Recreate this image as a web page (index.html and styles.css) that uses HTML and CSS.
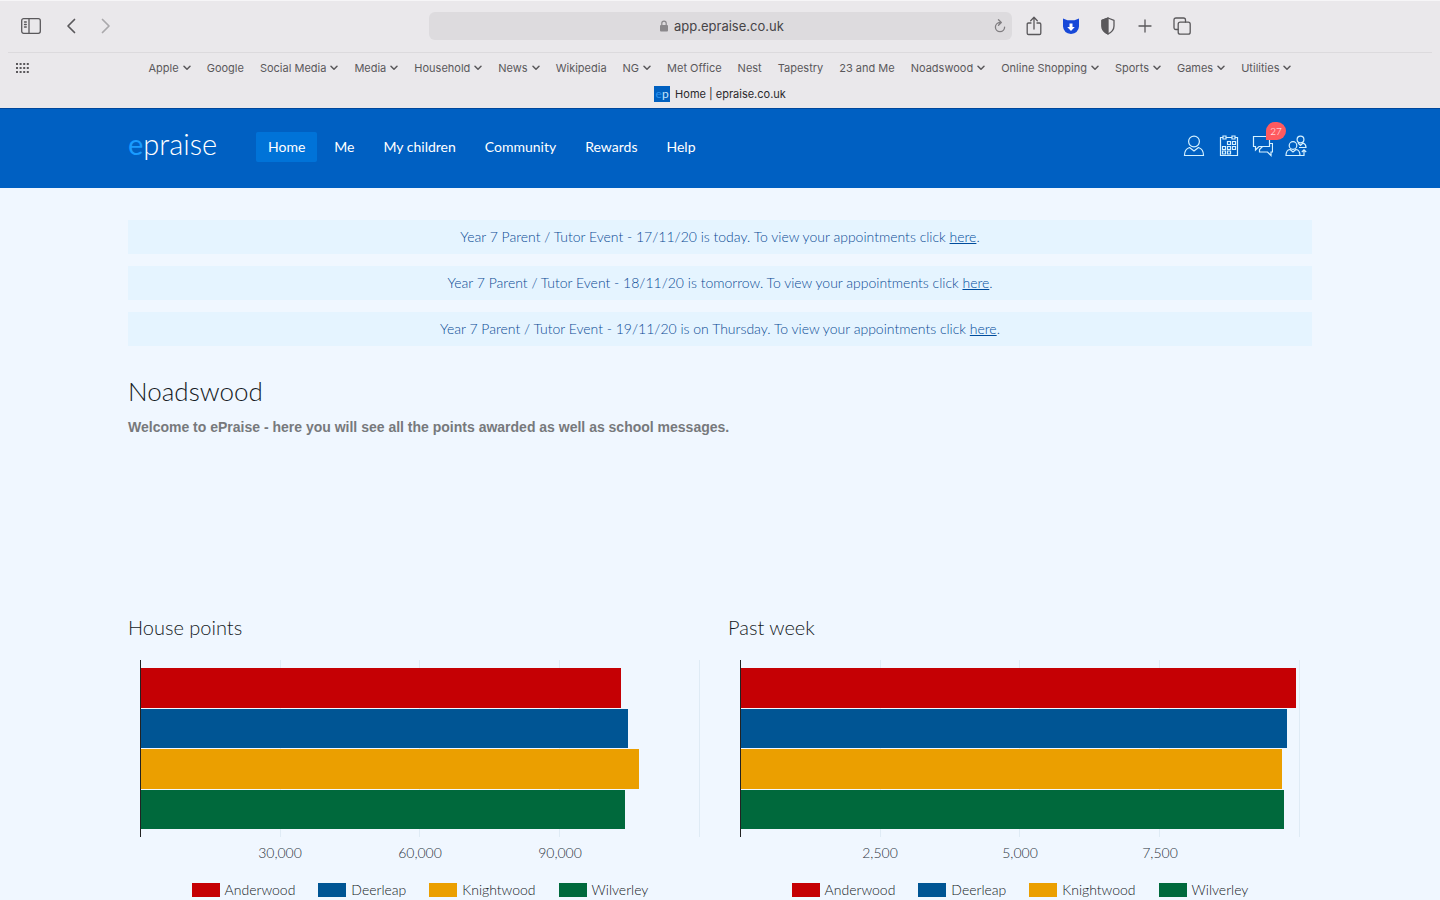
FILE: index.html
```html
<!DOCTYPE html>
<html lang="en">
<head>
    <meta charset="UTF-8">
    <meta name="viewport" content="width=device-width, initial-scale=1.0">
    <title>Home | epraise.co.uk</title>
    <link rel="stylesheet" href="styles.css">
</head>
<body>
    <svg class="sprite" aria-hidden="true">
        <symbol id="chevron" viewBox="0 0 8 6"><path d="M1 1.2l3 3 3-3" fill="none" stroke="currentColor" stroke-width="1.5" stroke-linecap="round" stroke-linejoin="round"/></symbol>
    </svg>

    <div class="browser">
        <div class="toolbar">
            <div class="tools tools-left">
                <button aria-label="Sidebar"><svg width="20" height="16" viewBox="0 0 20 16"><rect x="0.7" y="0.7" width="18.6" height="14.6" rx="2"/><path d="M8 1v14M3.500 4h1.800M3.500 6.500h1.800M3.500 9h1.800"/></svg></button>
                <button aria-label="Back"><svg width="10" height="16" viewBox="0 0 10 16"><path d="M8.500 1.500L2 8l6.500 6.500" stroke-width="1.700"/></svg></button>
                <button aria-label="Forward" class="disabled" disabled><svg width="10" height="16" viewBox="0 0 10 16"><path d="M1.500 1.500L8 8l-6.500 6.500" stroke-width="1.700"/></svg></button>
            </div>
            <div class="address">
                <svg class="lock" width="8" height="12" viewBox="0 0 8 12"><path d="M1.800 6V3.300a2.200 2.200 0 0 1 4.400 0V6" fill="none" stroke="#8a888b" stroke-width="1.200"/><rect class="lock-body" y="5" width="8" height="6.500" rx="1"/></svg>
                <input type="text" value="app.epraise.co.uk" aria-label="Address">
                <button class="reload" aria-label="Reload"><svg width="12" height="14" viewBox="0 0 12 14"><path d="M6 3.500a4.600 4.600 0 1 0 4.600 4.600M4.500 0.800L7.300 3.500 4.500 6.200"/></svg></button>
            </div>
            <div class="tools tools-right">
                <button aria-label="Share"><svg width="16" height="20" viewBox="0 0 16 20"><path d="M5 7H2.500Q1.200 7 1.200 8.300v8.900q0 1.300 1.300 1.300h11q1.300 0 1.300-1.300V8.300Q14.800 7 13.500 7H11M8 13V1.500M4.700 4.700L8 1.300l3.300 3.400"/></svg></button>
                <button aria-label="Downloads"><svg width="18" height="18" viewBox="0 0 18 18"><path d="M1 1.500l4.500 1.700h7L17 1.500v8Q16.500 16 9 17 1.500 16 1 9.500z" fill="#1748d8" stroke="none"/><path d="M7.500 6.500h3V10h2.300L9 14 5.200 10h2.300z" fill="#fff" stroke="none"/></svg></button>
                <button aria-label="Privacy report"><svg width="14" height="18" viewBox="0 0 14 18"><path d="M7 1l6 2.300V9q0 5-6 8-6-3-6-8V3.300z"/><path d="M7 1v16Q1 14 1 9V3.300z" fill="currentColor"/></svg></button>
                <button aria-label="New tab"><svg width="14" height="14" viewBox="0 0 14 14"><path d="M7 1v12M1 7h12"/></svg></button>
                <button aria-label="Tab overview"><svg width="18" height="18" viewBox="0 0 18 18"><rect x="5.200" y="5.200" width="12" height="12" rx="2"/><path d="M5 12.500H3q-2 0-2-2V3q0-2 2-2h7.500q2 0 2 2v2"/></svg></button>
            </div>
        </div>

        <div class="bookmarks">
            <button class="favourites" aria-label="Favourites"><svg width="13" height="10" viewBox="0 0 13 10"><path d="M0 1h13M0 5h13M0 9h13" stroke="currentColor" stroke-width="2" stroke-dasharray="2 1.600"/></svg></button>
            <button>Apple <svg class="chevron"><use href="#chevron"/></svg></button>
            <button>Google</button>
            <button>Social Media <svg class="chevron"><use href="#chevron"/></svg></button>
            <button>Media <svg class="chevron"><use href="#chevron"/></svg></button>
            <button>Household <svg class="chevron"><use href="#chevron"/></svg></button>
            <button>News <svg class="chevron"><use href="#chevron"/></svg></button>
            <button>Wikipedia</button>
            <button>NG <svg class="chevron"><use href="#chevron"/></svg></button>
            <button>Met Office</button>
            <button>Nest</button>
            <button>Tapestry</button>
            <button>23 and Me</button>
            <button>Noadswood <svg class="chevron"><use href="#chevron"/></svg></button>
            <button>Online Shopping <svg class="chevron"><use href="#chevron"/></svg></button>
            <button>Sports <svg class="chevron"><use href="#chevron"/></svg></button>
            <button>Games <svg class="chevron"><use href="#chevron"/></svg></button>
            <button>Utilities <svg class="chevron"><use href="#chevron"/></svg></button>
        </div>

        <div class="tab">
            <span class="favicon"><b>e</b>p</span>
            <span>Home | epraise.co.uk</span>
        </div>
    </div>

    <header class="header">
        <div class="container header-inner">
            <a href="#" class="logo"><span>e</span>praise</a>
            <nav class="nav">
                <a href="#" class="active">Home</a>
                <a href="#">Me</a>
                <a href="#">My children</a>
                <a href="#">Community</a>
                <a href="#">Rewards</a>
                <a href="#">Help</a>
            </nav>
            <div class="user-links">
                <a href="#" aria-label="Profile"><svg width="22" height="22" viewBox="0 0 22 22"><circle cx="11" cy="6.500" r="5.400"/><path d="M6.500 12.500Q1.500 14 1.500 20.500h19q0-6.500-5-8M6.500 12.500l4.500 3.500 4.500-3.500"/></svg></a>
                <a href="#" aria-label="Calendar"><svg width="22" height="22" viewBox="0 0 22 22"><path d="M6 2.500H3.500v18h17v-18H18M9 2.500h6M6 1h3v3H6zM15 1h3v3h-3zM10.500 6.500h3v3h-3zM15.500 6.500h3v3h-3zM5.500 11.500h3v3h-3zM10.500 11.500h3v3h-3zM15.500 11.500h3v3h-3zM5.500 16h3v3h-3zM10.500 16h3v3h-3z"/></svg></a>
                <a href="#" aria-label="Messages, 27 unread"><svg width="22" height="22" viewBox="0 0 22 22"><path d="M2.500 1.500h16v10H8l-3.500 3.500v-3.500h-2zM18.500 8.500h3v8.500H20v3.500L16.500 17h-8v-2.500l3-3"/></svg><span class="badge">27</span></a>
                <a href="#" aria-label="Switch user"><svg width="22" height="22" viewBox="0 0 22 22"><circle cx="15.500" cy="4.500" r="3.400"/><circle cx="8" cy="10.500" r="3.800"/><path d="M13 8l2.500 2.500L18 8q3 1 3 4.500h-7M5 14.500q-4 .5-4 6h14q0-5.500-4-6l-3 2.500zM15.500 20.500h3.500V15M16.800 17l2.200-2.200 2.200 2.200"/></svg></a>
            </div>
        </div>
    </header>

    <main class="container">
        <div class="notices">
            <p>Year 7 Parent / Tutor Event - 17/11/20 is today. To view your appointments click <a href="#">here</a>.</p>
            <p>Year 7 Parent / Tutor Event - 18/11/20 is tomorrow. To view your appointments click <a href="#">here</a>.</p>
            <p>Year 7 Parent / Tutor Event - 19/11/20 is on Thursday. To view your appointments click <a href="#">here</a>.</p>
        </div>

        <section class="welcome">
            <h1>Noadswood</h1>
            <p>Welcome to ePraise - here you will see all the points awarded as well as school messages.</p>
        </section>

        <div class="charts">
            <section class="chart">
                <h2>House points</h2>
                <div class="plot">
                    <div class="bar anderwood" style="width: 85.9%"></div>
                    <div class="bar deerleap" style="width: 87.1%"></div>
                    <div class="bar knightwood" style="width: 89.1%"></div>
                    <div class="bar wilverley" style="width: 86.6%"></div>
                </div>
                <div class="ticks"><span>30,000</span><span>60,000</span><span>90,000</span></div>
                <ul class="legend">
                    <li><i class="anderwood"></i>Anderwood</li>
                    <li><i class="deerleap"></i>Deerleap</li>
                    <li><i class="knightwood"></i>Knightwood</li>
                    <li><i class="wilverley"></i>Wilverley</li>
                </ul>
            </section>
            <section class="chart">
                <h2>Past week</h2>
                <div class="plot">
                    <div class="bar anderwood" style="width: 99.3%"></div>
                    <div class="bar deerleap" style="width: 97.7%"></div>
                    <div class="bar knightwood" style="width: 96.8%"></div>
                    <div class="bar wilverley" style="width: 97.1%"></div>
                </div>
                <div class="ticks"><span>2,500</span><span>5,000</span><span>7,500</span></div>
                <ul class="legend">
                    <li><i class="anderwood"></i>Anderwood</li>
                    <li><i class="deerleap"></i>Deerleap</li>
                    <li><i class="knightwood"></i>Knightwood</li>
                    <li><i class="wilverley"></i>Wilverley</li>
                </ul>
            </section>
        </div>
    </main>
</body>
</html>
```
FILE: styles.css
```css
* {
    box-sizing: border-box;
}

body {
    margin: 0;
    background-color: #f0f7ff;
    color: #141a24;
    font-family: Lato, sans-serif;
    font-size: 14px;
    font-weight: 300;
    line-height: 20px;
}

button {
    padding: 0;
    border: none;
    background: none;
    color: inherit;
    font: inherit;
}

.sprite {
    display: none;
}

/* Browser bar */
.browser {
    background-color: #eae8eb;
    border-top: 1px solid #f6f5f7;
    color: #5a585b;
    font-family: Inter, sans-serif;
    font-size: 11px;
    font-weight: 400;
}

.toolbar {
    display: grid;
    grid-template-columns: 1fr minmax(200px, 583px) 1fr;
    align-items: center;
    height: 52px;
    margin: 0 8px;
    padding-bottom: 2px;
    border-bottom: 1px solid #dcdadd;
}

.tools {
    display: flex;
    align-items: center;
}

.tools button {
    display: flex;
    justify-content: center;
}

.toolbar svg {
    fill: none;
    stroke: currentColor;
    stroke-width: 1.3;
    stroke-linecap: round;
    stroke-linejoin: round;
}

.toolbar .lock-body {
    fill: #8a888b;
    stroke: none;
}

.tools-left {
    gap: 25px;
    padding-left: 13px;
}

.tools-right {
    gap: 17px;
    padding-left: 12px;
}

.tools-right button {
    width: 20px;
}

.tools .disabled {
    color: #aaa8ab;
}

.address {
    display: flex;
    align-items: center;
    justify-content: center;
    gap: 6px;
    height: 28px;
    padding-left: 6px;
    border-radius: 6px;
    background-color: #dddbde;
    position: relative;
}

.address input {
    width: 112px;
    padding: 0;
    border: none;
    background: none;
    color: #464447;
    font: 13px Inter, sans-serif;
}

.reload {
    display: flex;
    position: absolute;
    right: 6px;
    color: #807e81;
}

.bookmarks {
    display: flex;
    align-items: center;
    justify-content: center;
    gap: 16px;
    height: 30px;
    position: relative;
}

.bookmarks button {
    display: flex;
    align-items: center;
    gap: 4px;
    white-space: nowrap;
}

.bookmarks .favourites {
    position: absolute;
    left: 16px;
}

.chevron {
    width: 8px;
    height: 6px;
}

.tab {
    display: flex;
    align-items: center;
    justify-content: center;
    gap: 5px;
    height: 25px;
    padding-bottom: 4px;
    color: #2b292c;
}

.favicon {
    width: 16px;
    height: 16px;
    background-color: #0060c0;
    color: #c5e4fa;
    font: 400 12px/15px Lato, sans-serif;
    text-align: center;
}

.favicon b {
    color: #2b92ee;
    font-weight: 400;
}

/* Site header */
.container {
    max-width: 1184px;
    margin: 0 auto;
}

.header {
    background-color: #0060c2;
    border-top: 1px solid #00479c;
    padding: 23px 0 26px;
}

.header-inner {
    display: flex;
    align-items: center;
    height: 30px;
}

.header a {
    color: #fff;
    text-decoration: none;
}

.header .logo {
    width: 128px;
    padding-bottom: 7px;
    font-size: 29px;
    line-height: 30px;
}

.logo span {
    color: #1a9cff;
    font-weight: 400;
}

.nav {
    display: flex;
    gap: 5px;
    font-weight: 400;
}

.nav a {
    padding: 5px 12px;
    border-radius: 2px;
}

.nav .active {
    background-color: #0073d8;
}

.user-links {
    display: flex;
    gap: 12px;
    margin-left: auto;
    padding: 0 5px 2px 0;
}

.user-links a {
    display: flex;
    position: relative;
}

.user-links svg {
    fill: none;
    stroke: #d5f1ff;
    stroke-width: 1.2;
}

.badge {
    position: absolute;
    left: 15px;
    top: -13px;
    width: 20px;
    height: 18px;
    border-radius: 9px 9px 9px 0;
    background-color: #ff5a5f;
    font-size: 10px;
    line-height: 18px;
    text-align: center;
}

/* Notices */
.notices {
    display: grid;
    gap: 12px;
    padding-top: 32px;
}

.notices p {
    margin: 0;
    padding: 7px;
    background-color: #e5f4ff;
    color: #0a4a94;
    text-align: center;
}

.notices a {
    color: #004c9c;
}

.welcome {
    min-height: 240px;
    padding-top: 29px;
}

.welcome h1 {
    margin: 0;
    font-size: 26px;
    font-weight: 300;
    line-height: 32px;
}

.welcome p {
    margin: 10px 0 0;
    color: #77797c;
    font-family: "Liberation Sans", Arial, sans-serif;
    font-weight: 700;
}

/* Charts */
.charts {
    display: grid;
    grid-template-columns: 1fr 1fr;
    gap: 16px;
    padding-top: 29px;
}

.chart {
    padding: 0 12px;
}

.chart h2 {
    margin: 0 -12px 21px;
    font-size: 20px;
    font-weight: 300;
    line-height: 24px;
}

.plot {
    display: grid;
    grid-template-rows: repeat(4, 1fr);
    gap: 1px;
    height: 177px;
    padding: 8px 0;
    border-left: 1px solid #222;
    background: repeating-linear-gradient(to right, transparent 0 calc(25% - 1px), #dfebf5 calc(25% - 1px) 25%);
}

.anderwood {
    background-color: #c50004;
}

.deerleap {
    background-color: #005594;
}

.knightwood {
    background-color: #eb9f00;
}

.wilverley {
    background-color: #00693c;
}

.ticks {
    display: grid;
    grid-template-columns: repeat(3, 1fr);
    margin-top: 6px;
    padding: 0 12.5%;
    color: #2c3440;
    text-align: center;
}

.legend {
    display: flex;
    justify-content: center;
    gap: 23px;
    margin: 17px 0 0;
    padding: 0;
    list-style: none;
}

.legend li {
    display: flex;
    align-items: center;
    gap: 5px;
}

.legend i {
    width: 28px;
    height: 14px;
}
```
